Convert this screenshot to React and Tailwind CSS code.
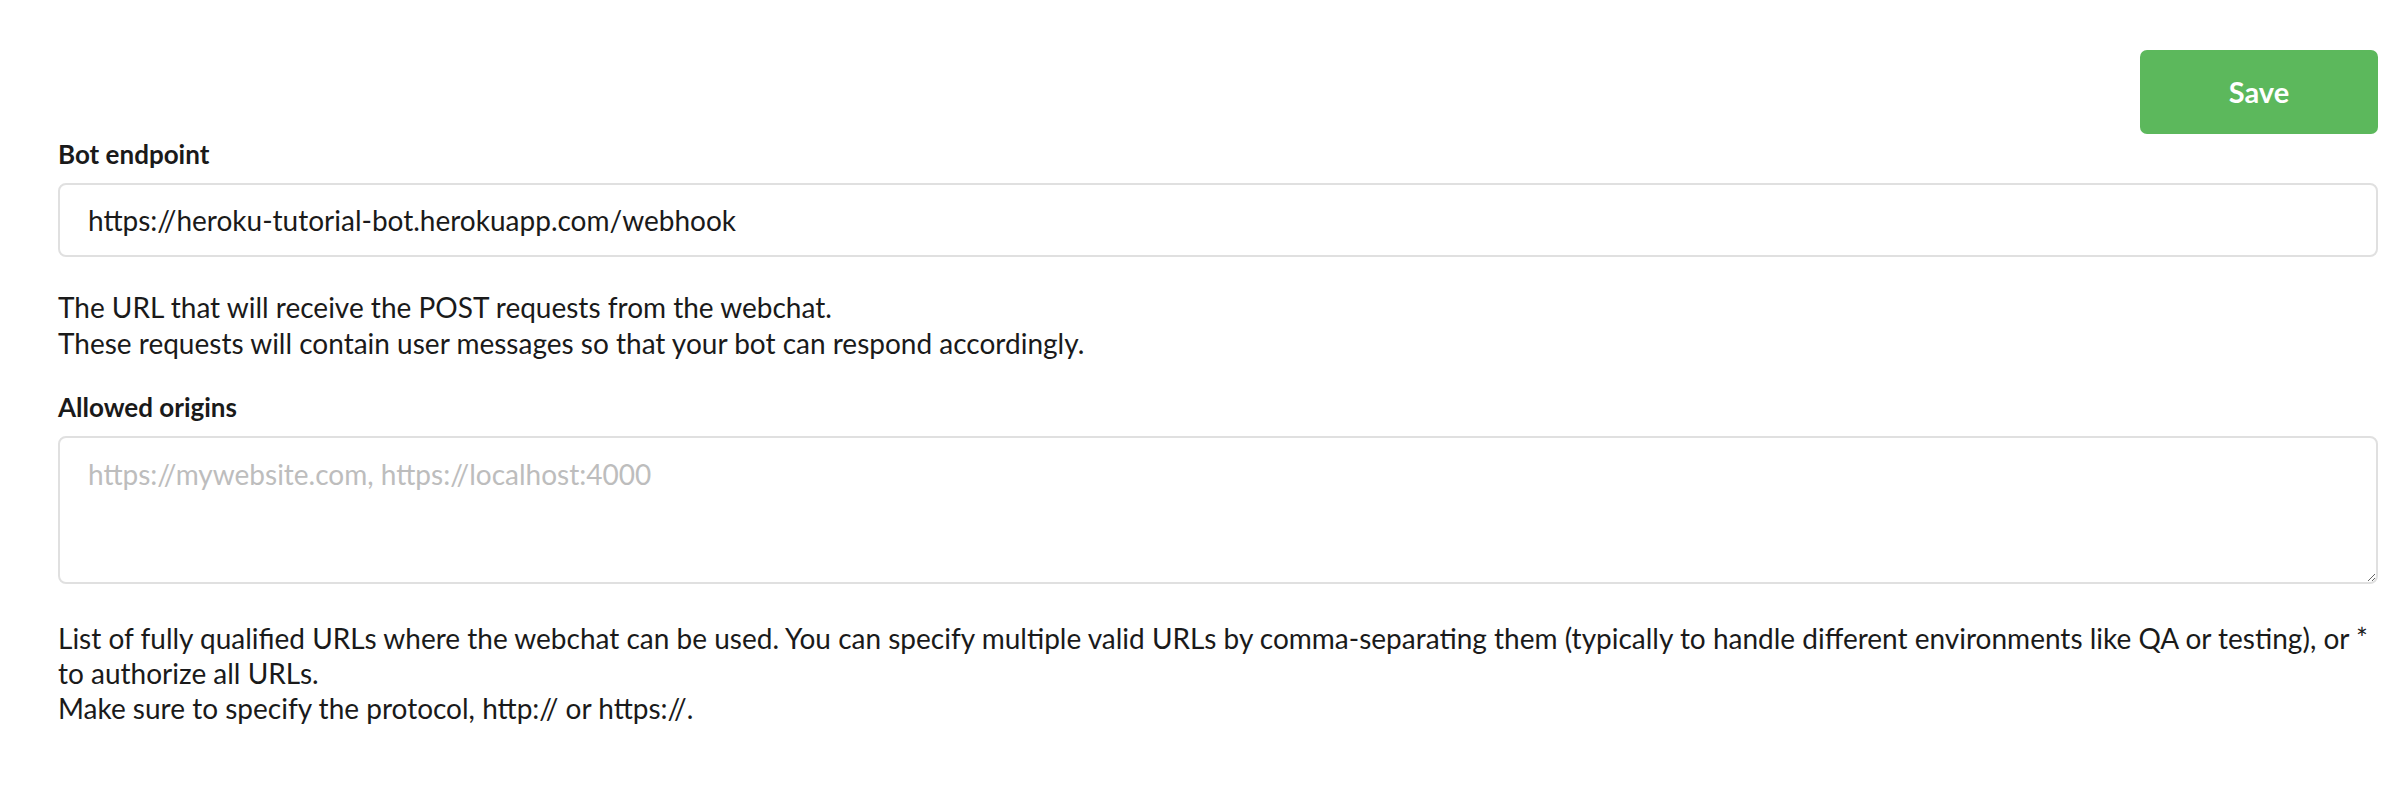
import React, { useState } from 'react';

function App() {
  const [endpoint, setEndpoint] = useState('https://heroku-tutorial-bot.herokuapp.com/webhook');
  const [origins, setOrigins] = useState('');

  return (
    <div className="min-h-screen bg-white pl-[58px] pr-[18px] pt-[50px] text-[#1a1a1a] font-['Lato',sans-serif]">
      <div className="flex justify-end">
        <button className="w-[238px] h-[84px] rounded-[7px] bg-[#5cb85c] text-white text-[29px] font-bold">
          Save
        </button>
      </div>

      <label className="block mt-[5px] text-[26px] leading-[30px] font-bold">Bot endpoint</label>
      <input
        value={endpoint}
        onChange={(e) => setEndpoint(e.target.value)}
        className="mt-[14px] block w-full h-[74px] px-[28px] rounded-[8px] border-2 border-[#e0e0e0] text-[28px] outline-none"
      />
      <p className="mt-[32px] text-[28px] leading-[36px]">
        The URL that will receive the POST requests from the webchat.
        <br />
        These requests will contain user messages so that your bot can respond accordingly.
      </p>

      <label className="block mt-[31px] text-[26px] leading-[30px] font-bold">Allowed origins</label>
      <textarea
        value={origins}
        onChange={(e) => setOrigins(e.target.value)}
        placeholder="https://mywebsite.com, https://localhost:4000"
        className="mt-[14px] block w-full h-[148px] px-[28px] pt-[18px] rounded-[8px] border-2 border-[#e0e0e0] text-[28px] leading-[36px] outline-none placeholder:text-[#bdbdbd]"
      />
      <p className="mt-[37px] text-[28px] leading-[35px]">
        List of fully qualified URLs where the webchat can be used. You can specify multiple valid URLs by
        comma-separating them (typically to handle different environments like QA or testing), or * to authorize all
        URLs.
        <br />
        Make sure to specify the protocol, http:// or https://.
      </p>
    </div>
  );
}

export default App;
